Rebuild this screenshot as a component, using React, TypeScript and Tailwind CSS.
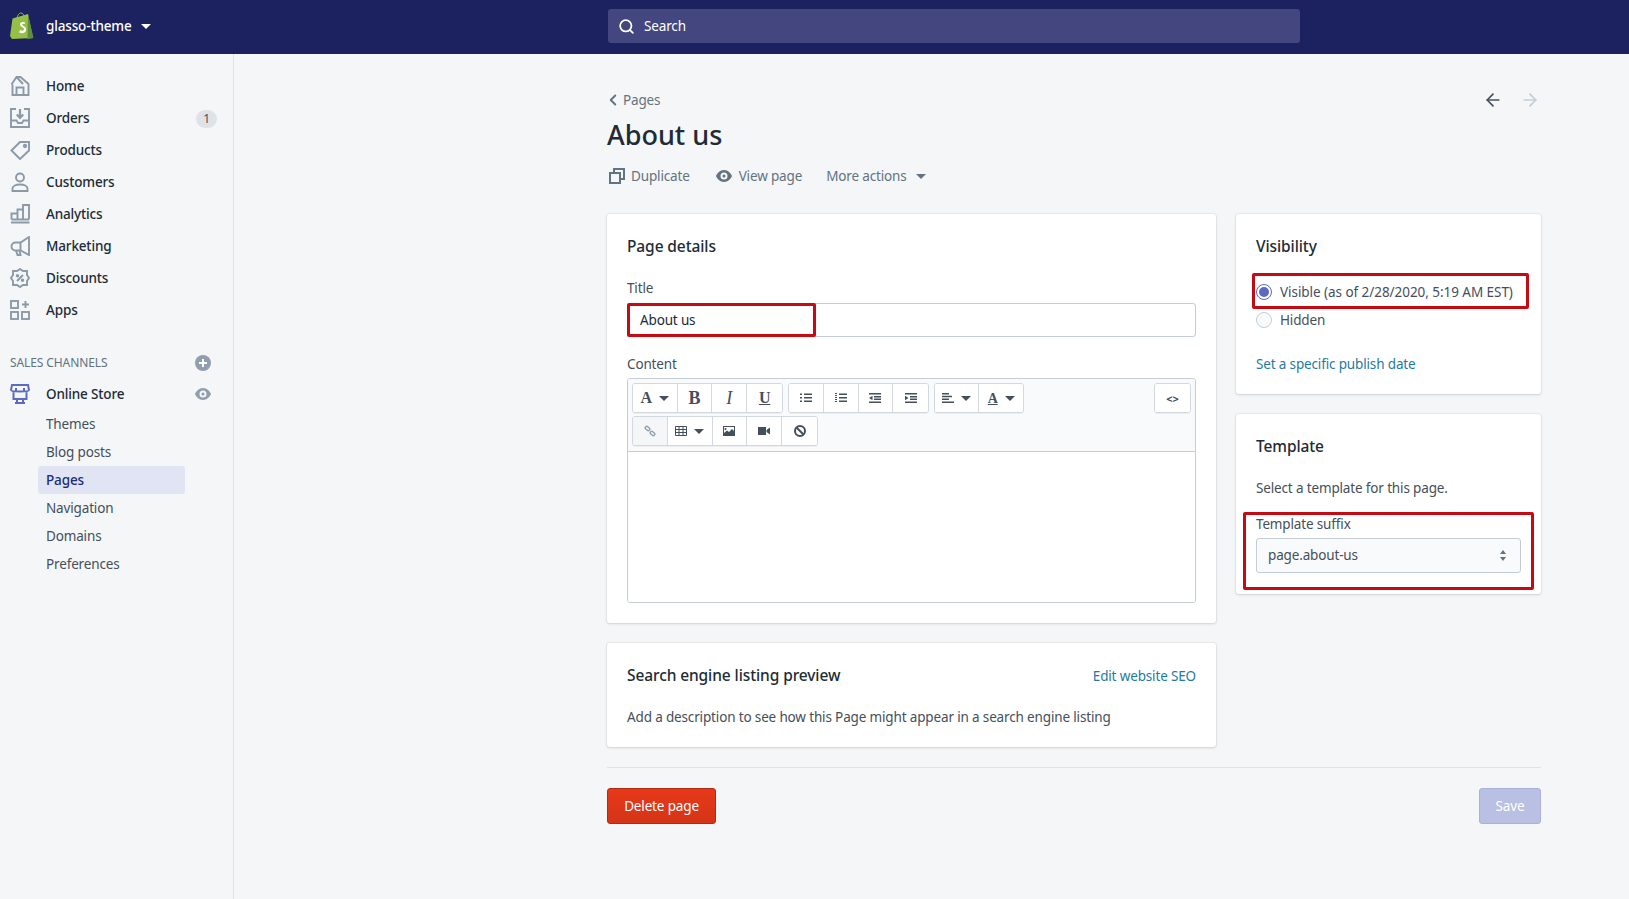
import React from "react";
import { Search, ChevronLeft, ArrowLeft, ArrowRight } from "lucide-react";

const FONT = "font-['Noto_Sans','Liberation_Sans',sans-serif]";
const HEADING = "text-[15.5px] font-medium tracking-[-0.1px]";
const LINK = "text-[#1f7ba3]";

const Caret = ({ className = "" }: { className?: string }) => (
  <svg viewBox="0 0 10 5" className={`w-[10px] h-[5px] ${className}`} fill="currentColor">
    <path d="M0 0h10L5 5z" />
  </svg>
);

const NavIcon = ({ children }: { children: React.ReactNode }) => (
  <svg viewBox="0 0 20 20" className="w-[20px] h-[20px] text-[#8c9aa8]" fill="none" stroke="currentColor" strokeWidth="1.9">
    {children}
  </svg>
);

const navItems: { label: string; badge?: string; icon: React.ReactNode }[] = [
  {
    label: "Home",
    icon: <path d="M1.500 8.500 L6.500 1 H10.500 L18.500 8 V19 H2.500 V8.500 M6.500 19 V11.500 H13.500 V19 M6.500 1 L13 8" />,
  },
  {
    label: "Orders",
    badge: "1",
    icon: (
      <>
        <path d="M6 1H1V19H19V1H14" />
        <path d="M1 12.500H6.500L8 15H12L13.500 12.500H19" />
        <path d="M10 1V9M6.800 6.500 10 9.800 13.200 6.500" strokeWidth="2.200" />
      </>
    ),
  },
  {
    label: "Products",
    icon: (
      <>
        <path d="M1.500 10.500 10 2H19V10.500L10 19z" />
        <circle cx="15" cy="6" r="1.200" />
      </>
    ),
  },
  {
    label: "Customers",
    icon: (
      <>
        <circle cx="10" cy="5.500" r="4" />
        <path d="M2.500 19V16.500C2.500 14 6 12.500 10 12.500S17.500 14 17.500 16.500V19z" />
      </>
    ),
  },
  {
    label: "Analytics",
    icon: (
      <>
        <path d="M1 18.500H19.500" strokeWidth="2" />
        <path d="M1.500 15.500V9.500H7.500V15.500M7.500 15.500V5.500H13V15.500M13 15.500V1H19V15.500M1.500 15.500H19" />
      </>
    ),
  },
  {
    label: "Marketing",
    icon: (
      <>
        <path d="M19 1V19L10.500 14.500H5.500A4 4 0 0 1 5.500 6.500H10.500z" />
        <path d="M10.500 6.500V14.500M6 14.500 7.500 19H10.500L9.500 15" />
      </>
    ),
  },
  {
    label: "Discounts",
    icon: (
      <>
        <path d="M10 1 13 3H17V7L19 10 17 13V17H13L10 19 7 17H3V13L1 10 3 7V3H7z" />
        <path d="M7 13 13 7" />
        <circle cx="7.500" cy="7.800" r=".8" />
        <circle cx="12.500" cy="12.200" r=".8" />
      </>
    ),
  },
  {
    label: "Apps",
    icon: (
      <>
        <rect x="1" y="1" width="7" height="7" />
        <rect x="1" y="12" width="7" height="7" />
        <rect x="12" y="12" width="7" height="7" />
        <path d="M15.500 1V8M12 4.500H19" />
      </>
    ),
  },
];

const subItems = ["Themes", "Blog posts", "Pages", "Navigation", "Domains", "Preferences"];

const Sidebar = () => (
  <div className="w-[234px] shrink-0 border-r border-[#dfe3e8] pt-4 min-h-[845px]">
    {navItems.map((each) => (
      <div key={each.label} className="flex items-center h-[32px] pl-[10px] pr-[16px] text-[#212b36]">
        <NavIcon>{each.icon}</NavIcon>
        <span className="ml-[16px] font-medium">{each.label}</span>
        {each.badge && (
          <span className="ml-auto mt-[2px] w-[21px] h-[18px] rounded-full bg-[#dfe3e8] text-[#454f5b] text-[12px] flex items-center justify-center">
            {each.badge}
          </span>
        )}
      </div>
    ))}
    <div className="flex items-center justify-between mt-[22px] h-[30px] pl-[10px] pr-[22px]">
      <span className="text-[12px] tracking-[-0.1px] text-[#637381]">SALES CHANNELS</span>
      <svg viewBox="0 0 16 16" className="w-4 h-4 text-[#919eab]">
        <circle cx="8" cy="8" r="8" fill="currentColor" />
        <path d="M8 4v8M4 8h8" stroke="#fff" strokeWidth="2" />
      </svg>
    </div>
    <div className="flex items-center h-[32px] pl-[10px] pr-[22px]">
      <svg viewBox="0 0 20 20" className="w-[20px] h-[20px] text-[#5c6ac4]" fill="none" stroke="currentColor" strokeWidth="2">
        <path d="M2 1H18L19 6C19 8 1 8 1 6zM3.500 8V15H16.500V8M7 15V19M13 15V19M5 19H15M6 4V7M14 4V7" />
      </svg>
      <span className="ml-[16px] font-medium text-[#212b36]">Online Store</span>
      <svg viewBox="0 0 16 12" className="ml-auto w-4 h-3 text-[#919eab]" fill="currentColor">
        <path fillRule="evenodd" d="M8 0c4 0 7 3.500 8 6-1 2.500-4 6-8 6s-7-3.500-8-6c1-2.500 4-6 8-6zm0 2.500a3.500 3.500 0 1 0 0 7 3.500 3.500 0 0 0 0-7zM8 4.500a1.500 1.500 0 1 1 0 3 1.500 1.500 0 0 1 0-3z" />
      </svg>
    </div>
    <div className="flex flex-col">
      {subItems.map((each) => (
        <div
          key={each}
          className={`ml-[38px] w-[147px] h-[28px] pl-[8px] flex items-center rounded-[3px] ${
            each === "Pages" ? "bg-[#e0e4f3] text-[#202e78] font-medium" : "text-[#454f5b]"
          }`}
        >
          {each}
        </div>
      ))}
    </div>
  </div>
);

const Card = ({ className = "", children }: { className?: string; children: React.ReactNode }) => (
  <div className={`relative bg-white rounded-[3px] shadow-[0_0_0_1px_rgba(63,63,68,0.05),0_1px_3px_0_rgba(63,63,68,0.15)] ${className}`}>
    {children}
  </div>
);

const Tool = ({ w = "w-[34.8px]", dim, children }: { w?: string; dim?: boolean; children: React.ReactNode }) => (
  <div className={`${w} h-full flex items-center justify-center gap-[7px] text-[#454f5b] border-r border-[#d3d8de] last:border-r-0 ${dim ? "bg-[#f4f6f8]" : "bg-white"}`}>
    {children}
  </div>
);

const Group = ({ children }: { children: React.ReactNode }) => (
  <div className="flex h-[30px] rounded-[3px] border border-[#d3d8de] shadow-[0_1px_0_rgba(22,29,37,0.05)] overflow-hidden">{children}</div>
);

const ListGlyph = ({ numbered }: { numbered?: boolean }) => (
  <svg viewBox="0 0 12 10" className="w-[12px] h-[10px]" fill="currentColor">
    <path d={numbered ? "M0 0h2v1H0zM0 2h2v1H0zM0 4h2v1H0zM0 6h2v1H0zM0 8h2v1H0zM4 0.500h8v1.500H4zM4 4h8v1.500H4zM4 7.500h8V9H4z" : "M0 0.500h2v1.500H0zM0 4h2v1.500H0zM0 7.500h2V9H0zM4 0.500h8v1.500H4zM4 4h8v1.500H4zM4 7.500h8V9H4z"} />
  </svg>
);

const IndentGlyph = ({ right }: { right?: boolean }) => (
  <svg viewBox="0 0 12 10" className="w-[12px] h-[10px]" fill="currentColor">
    <path d="M0 0h12v1.500H0zM0 8.500h12V10H0zM5 3h7v1.500H5zM5 5.500h7V7H5z" />
    <path d={right ? "M0 2.800 3.500 5 0 7.200z" : "M3.500 2.800 0 5l3.500 2.200z"} />
  </svg>
);

const Editor = () => (
  <div className="mt-[4px] h-[225px] border border-[#c4cdd5] rounded-[3px] overflow-hidden flex flex-col">
    <div className="h-[73px] shrink-0 bg-[#f9fafb] border-b border-[#c4cdd5] pt-[4px] px-[4px] relative">
      <div className="flex gap-[5px]">
        <Group>
          <Tool w="w-[44.6px]">
            <span className="font-['Liberation_Serif',serif] font-bold text-[16px]">A</span>
            <Caret />
          </Tool>
          <Tool><span className="font-['Liberation_Serif',serif] font-bold text-[18px]">B</span></Tool>
          <Tool><span className="font-['Liberation_Serif',serif] italic text-[18px]">I</span></Tool>
          <Tool><span className="font-['Liberation_Serif',serif] font-bold text-[16px] underline">U</span></Tool>
        </Group>
        <Group>
          <Tool><ListGlyph /></Tool>
          <Tool><ListGlyph numbered /></Tool>
          <Tool><IndentGlyph /></Tool>
          <Tool><IndentGlyph right /></Tool>
        </Group>
        <Group>
          <Tool w="w-[44px]">
            <svg viewBox="0 0 12 10" className="w-[12px] h-[10px]" fill="currentColor">
              <path d="M0 0h7v1.500H0zM0 2.800h10v1.500H0zM0 5.600h7v1.500H0zM0 8.400h12V10H0z" />
            </svg>
            <Caret />
          </Tool>
          <Tool w="w-[44px]">
            <span className="font-['Liberation_Serif',serif] font-bold text-[14px] underline">A</span>
            <Caret />
          </Tool>
        </Group>
      </div>
      <div className="absolute right-[4px] top-[4px]">
        <Group>
          <Tool><span className="text-[11px] font-bold leading-none tracking-normal">&lt;&gt;</span></Tool>
        </Group>
      </div>
      <div className="flex mt-[3px]">
        <Group>
          <Tool dim>
            <svg viewBox="0 0 12 12" className="w-[12px] h-[12px] text-[#919eab]" fill="none" stroke="currentColor" strokeWidth="1.400">
              <rect x="-2.500" y="-1.500" width="5" height="3" rx="1.500" transform="translate(3.500 3.500) rotate(40)" />
              <rect x="-2.500" y="-1.500" width="5" height="3" rx="1.500" transform="translate(8.500 8.500) rotate(40)" />
            </svg>
          </Tool>
          <Tool w="w-[44.8px]">
            <svg viewBox="0 0 12 10" className="w-[12px] h-[10px]" fill="none" stroke="currentColor" strokeWidth="1">
              <path d="M.5.500h11v9H.5zM.5 3.500h11M.5 6.500h11M4 .500v9M8 .500v9" />
            </svg>
            <Caret />
          </Tool>
          <Tool>
            <svg viewBox="0 0 12 10" className="w-[12px] h-[10px]" fill="currentColor">
              <path fillRule="evenodd" d="M0 0h12v10H0zM1 1v6l3-2.500 2 1.500 3-3 2 2V1zM2.500 2a1 1 0 1 0 .01 0z" />
            </svg>
          </Tool>
          <Tool>
            <svg viewBox="0 0 12 8" className="w-[12px] h-[8px]" fill="currentColor">
              <path d="M0 0h8v8H0zM8.500 3 12 .500v7L8.500 5z" />
            </svg>
          </Tool>
          <Tool>
            <svg viewBox="0 0 12 12" className="w-[12px] h-[12px]" fill="none" stroke="currentColor" strokeWidth="2">
              <circle cx="6" cy="6" r="5" />
              <path d="M2.500 2.500 9.500 9.500" />
            </svg>
          </Tool>
        </Group>
      </div>
    </div>
    <div className="flex-1 bg-white" />
  </div>
);

const RedBox = ({ className }: { className: string }) => (
  <div className={`absolute border-[3px] border-[#c40a12] rounded-[2px] ${className}`} />
);

export default function App() {
  return (
    <div className={`min-h-[899px] bg-[#f4f6f8] text-[13.5px] tracking-[-0.15px] text-[#212b36] ${FONT}`}>
      <div className="h-[54px] pb-[2px] bg-[#1c2260] flex items-center">
        <div className="w-[608px] shrink-0 flex items-center pl-[10px]">
          <svg viewBox="0 0 24 28" className="w-[24px] h-[28px]">
            <path d="M2.500 6.500 18 2l5 24-21 1L0 24z" fill="#95bf47" />
            <path d="M18 2l5.500 24-6 1.200z" fill="#5e8e3e" />
            <path d="M7 7c0-3 2-6 4-6s3 2 3 4" fill="none" stroke="#95bf47" strokeWidth="1" />
            <path d="M15 10.500c-2-1-5-.500-5 2 0 2.500 4 2.500 4 5 0 1.500-2 1.500-4 .500l-.800 2.500c3 1.500 7 .500 7-3 0-3-4-3.500-4-5 0-1 1.500-1 2.500-.500z" fill="#fff" />
          </svg>
          <span className="ml-[12px] text-white font-medium">glasso-theme</span>
          <Caret className="ml-[9px] text-white" />
        </div>
        <div className="w-[692px] h-[34px] bg-[#43467f] rounded-[3px] flex items-center pl-[10px] text-white">
          <Search size={17} strokeWidth={2.5} />
          <span className="ml-[9px]">Search</span>
        </div>
      </div>

      <div className="flex">
        <Sidebar />
        <div className="pl-[373px] w-[1307px] pt-[35px]">
          <div className="flex items-center justify-between h-[22px]">
            <div className="flex items-center text-[#637381]">
              <ChevronLeft size={18} strokeWidth={2.6} className="-ml-[3px]" />
              <span className="ml-[1px]">Pages</span>
            </div>
            <div className="flex items-center gap-[17px] pr-[1px]">
              <ArrowLeft size={20} strokeWidth={2} className="text-[#454f5b]" />
              <ArrowRight size={20} strokeWidth={2} className="text-[#c4cdd5]" />
            </div>
          </div>
          <div className="mt-[6px] text-[27px] leading-[36px] font-medium tracking-normal">About us</div>
          <div className="mt-[10px] h-[26px] flex items-center text-[#637381]">
            <svg viewBox="0 0 16 16" className="ml-[2px] w-4 h-4 text-[#637381]" fill="none" stroke="currentColor" strokeWidth="2">
              <path d="M5 5V1h10v10h-4M1 5h10v10H1z" />
            </svg>
            <span className="ml-[6px]">Duplicate</span>
            <svg viewBox="0 0 16 12" className="ml-[26px] w-4 h-3" fill="currentColor">
              <path fillRule="evenodd" d="M8 0c4 0 7 3.500 8 6-1 2.500-4 6-8 6s-7-3.500-8-6c1-2.500 4-6 8-6zm0 2.500a3.500 3.500 0 1 0 0 7 3.500 3.500 0 0 0 0-7zM8 4.500a1.500 1.500 0 1 1 0 3 1.500 1.500 0 0 1 0-3z" />
            </svg>
            <span className="ml-[7px]">View page</span>
            <span className="ml-[24px]">More actions</span>
            <Caret className="ml-[9px]" />
          </div>

          <div className="mt-[25px] flex gap-[20px] items-start">
            <div className="w-[609px] flex flex-col gap-[20px]">
              <Card className="px-[20px] pt-[20px] pb-[20px] h-[409px]">
                <div className={`h-[24px] leading-[24px] ${HEADING}`}>Page details</div>
                <div className="mt-[20px] h-[20px] leading-[20px] text-[#454f5b]">Title</div>
                <div className="relative mt-[5px] h-[34px] border border-[#c4cdd5] rounded-[3px] pl-[12px] flex items-center">
                  About us
                  <RedBox className="-left-px -top-px w-[189px] h-[34px]" />
                </div>
                <div className="mt-[17px] h-[20px] leading-[20px] text-[#454f5b]">Content</div>
                <Editor />
              </Card>
              <Card className="px-[20px] pt-[20px] h-[104px]">
                <div className="flex items-center justify-between h-[24px] mt-[1px]">
                  <span className={HEADING}>Search engine listing preview</span>
                  <span className={LINK}>Edit website SEO</span>
                </div>
                <div className="mt-[19px] text-[#454f5b]">Add a description to see how this Page might appear in a search engine listing</div>
              </Card>
            </div>

            <div className="w-[305px] flex flex-col gap-[20px]">
              <Card className="px-[20px] pt-[20px] h-[180px]">
                <div className={`h-[24px] leading-[24px] ${HEADING}`}>Visibility</div>
                <div className="mt-[20px] h-[28px] flex items-center text-[#454f5b] whitespace-nowrap">
                  <span className="w-4 h-4 rounded-full border border-[#5c6ac4] flex items-center justify-center">
                    <span className="w-[10px] h-[10px] rounded-full bg-[#5c6ac4]" />
                  </span>
                  <span className="ml-[8px] tracking-[-0.05px]">Visible (as of 2/28/2020, 5:19 AM EST)</span>
                </div>
                <div className="h-[28px] flex items-center text-[#454f5b]">
                  <span className="w-4 h-4 rounded-full border border-[#c4cdd5] bg-[#f9fafb]" />
                  <span className="ml-[8px]">Hidden</span>
                </div>
                <div className={`mt-[20px] ${LINK}`}>Set a specific publish date</div>
                <RedBox className="left-[16px] top-[59px] w-[277px] h-[36px]" />
              </Card>
              <Card className="px-[20px] pt-[20px] h-[180px]">
                <div className={`h-[24px] leading-[24px] ${HEADING}`}>Template</div>
                <div className="mt-[20px] h-[20px] leading-[20px] text-[#454f5b]">Select a template for this page.</div>
                <div className="mt-[16px] h-[20px] leading-[20px] text-[#454f5b]">Template suffix</div>
                <div className="mt-[4px] h-[35px] border border-[#c4cdd5] rounded-[3px] bg-[#f9fafb] pl-[11px] pr-[14px] flex items-center justify-between text-[#454f5b]">
                  page.about-us
                  <svg viewBox="0 0 6 11" className="w-[6px] h-[11px] text-[#637381]" fill="currentColor">
                    <path d="M3 0l3 4H0zM3 11 0 7h6z" />
                  </svg>
                </div>
                <RedBox className="left-[7px] top-[98px] w-[291px] h-[78px]" />
              </Card>
            </div>
          </div>

          <div className="mt-[20px] pt-[20px] border-t border-[#dfe3e8] flex justify-between">
            <div className="w-[109px] h-[36px] rounded-[3px] bg-gradient-to-b from-[#e6391a] to-[#d53417] border border-[#b02b13] text-white flex items-center justify-center">
              Delete page
            </div>
            <div className="w-[62px] h-[36px] rounded-[3px] bg-[#b9c0e4] border border-[#aab2dc] text-white flex items-center justify-center">
              Save
            </div>
          </div>
        </div>
      </div>
    </div>
  );
}
